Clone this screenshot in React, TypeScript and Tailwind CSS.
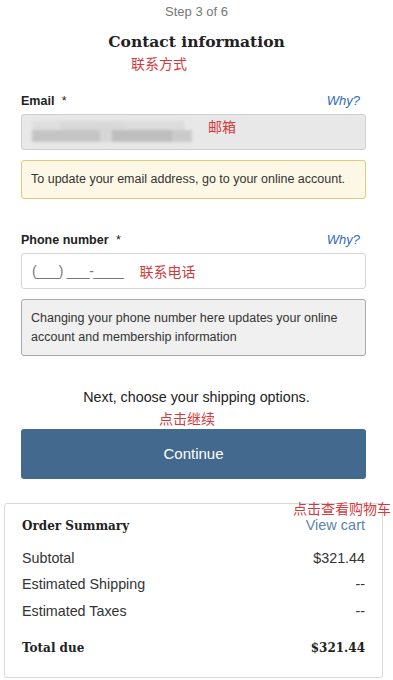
import React from 'react';

const sans = { fontFamily: '"Liberation Sans", Arial, sans-serif' };
const serif = { fontFamily: '"DejaVu Serif", "Liberation Serif", Georgia, serif' };
const cjk = { fontFamily: '"Noto Sans CJK SC", "Liberation Sans", sans-serif' };

function Note({ children, className = '' }: { children: React.ReactNode; className?: string }) {
  return (
    <div style={cjk} className={`text-[14px] leading-[20px] text-[#d23a3e] ${className}`}>
      {children}
    </div>
  );
}

function FieldLabel({ label }: { label: string }) {
  return (
    <div className="flex items-center justify-between h-[18px]">
      <span className="text-[12.5px] font-bold text-[#222]">
        {label} <span className="font-normal ml-1">*</span>
      </span>
      <span className="text-[13px] italic text-[#2e6cb5] mr-[6px]">Why?</span>
    </div>
  );
}

function SummaryRow({ label, value }: { label: string; value: string }) {
  return (
    <div className="flex justify-between items-center h-[26.5px] text-[14.3px] text-[#333]">
      <span>{label}</span>
      <span>{value}</span>
    </div>
  );
}

export default function App() {
  return (
    <div style={sans} className="w-[393px] h-[680px] bg-white overflow-hidden relative">
      <div className="pt-[3px] text-center text-[13px] leading-[18px] text-[#777]">Step 3 of 6</div>
      <h1 style={serif} className="mt-[10px] text-center text-[15.5px] leading-[22px] font-bold text-[#222]">
        Contact information
      </h1>
      <Note className="pl-[131px]">联系方式</Note>

      <div className="px-[21px] mr-[6px]">
        <div className="mt-[19px]">
          <FieldLabel label="Email" />
        </div>
        <div className="mt-[4px] relative h-[36px] rounded-[3px] border border-[#cfcfcf] bg-[#e8e8e8] flex items-center">
          <div className="absolute left-[10px] top-[6px] flex flex-col blur-[1.5px]">
            <div className="flex">
              <div className="w-[28px] h-[9px] bg-[#dedede]" />
              <div className="w-[65px] h-[9px] bg-[#d8d8d8]" />
              <div className="w-[60px] h-[9px] bg-[#dcdcdc]" />
            </div>
            <div className="flex">
              <div className="w-[68px] h-[12px] bg-[#c4c4c4]" />
              <div className="w-[12px] h-[12px] bg-[#d6d6d6]" />
              <div className="w-[60px] h-[12px] bg-[#bebebe]" />
              <div className="w-[20px] h-[12px] bg-[#cacaca]" />
            </div>
          </div>
          <Note className="absolute left-[186px] top-[1px]">邮箱</Note>
        </div>
        <div className="mt-[10px] h-[39px] rounded-[3px] border border-[#e8c77e] bg-[#fdf8e6] flex items-center px-[9px] text-[12.5px] text-[#333] whitespace-nowrap">
          To update your email address, go to your online account.
        </div>

        <div className="mt-[32px]">
          <FieldLabel label="Phone number" />
        </div>
        <div className="mt-[4px] h-[36px] rounded-[3px] border border-[#d4d4d4] bg-white flex items-center px-[10px] gap-[16px]">
          <span className="text-[14px] text-[#777] tracking-[-0.3px]">(___) ___-____</span>
          <Note>联系电话</Note>
        </div>
        <div className="mt-[10px] h-[57px] rounded-[3px] border border-[#a9a9a9] bg-[#f0f0f0] flex items-center px-[9px] text-[12.5px] leading-[19px] text-[#333]">
          Changing your phone number here updates your online account and membership information
        </div>
      </div>

      <div className="mt-[31px] text-center text-[14.3px] leading-[20px] text-[#222]">
        Next, choose your shipping options.
      </div>
      <Note className="pl-[159px] mt-[1px]">点击继续</Note>
      <div className="px-[21px] mr-[6px] mt-[1px]">
        <div className="h-[50px] rounded-[3px] bg-[#436a8e] flex items-center justify-center text-white text-[15px]">
          Continue
        </div>
      </div>

      <div className="ml-[4px] mr-[10px] mt-[24px] h-[175px] border border-[#dadada] rounded-[3px] px-[17px] pt-[10px] relative">
        <Note className="absolute right-[-9px] top-[-6px]">点击查看购物车</Note>
        <div className="flex justify-between items-center h-[24px]">
          <span style={serif} className="text-[12px] font-bold text-[#222]">Order Summary</span>
          <span className="text-[14.5px] text-[#5c84aa]">View cart</span>
        </div>
        <div className="mt-[7px]">
          <SummaryRow label="Subtotal" value="$321.44" />
          <SummaryRow label="Estimated Shipping" value="--" />
          <SummaryRow label="Estimated Taxes" value="--" />
        </div>
        <div className="mt-[11px] flex justify-between items-center h-[24px] text-[12px] font-bold text-[#222]" style={serif}>
          <span>Total due</span>
          <span>$321.44</span>
        </div>
      </div>
    </div>
  );
}
